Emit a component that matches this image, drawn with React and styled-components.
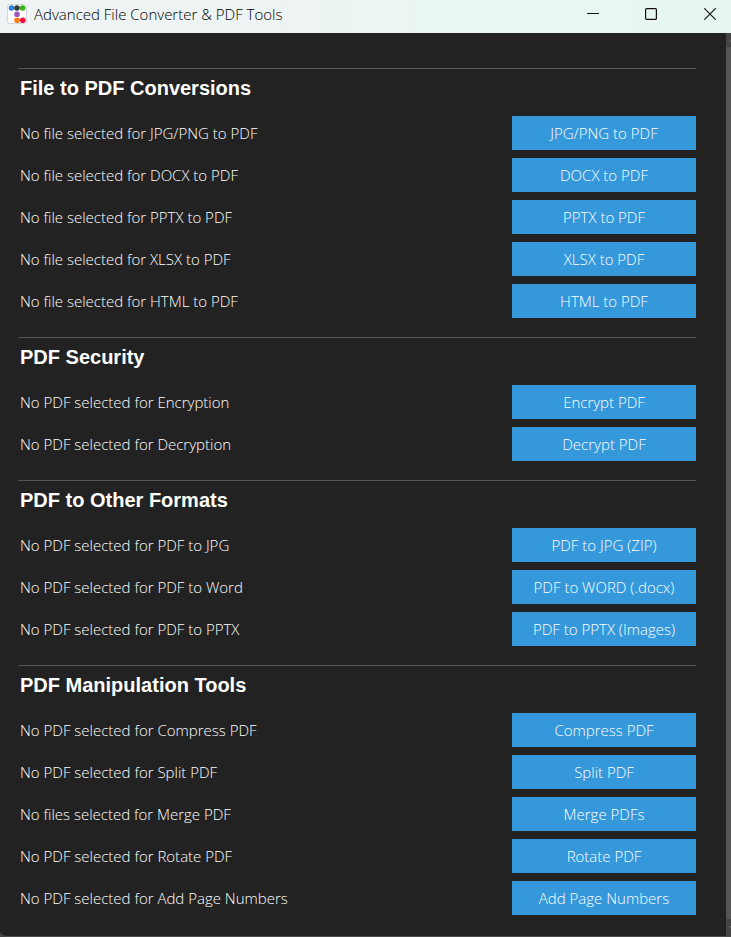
import React from "react";
import styled, { createGlobalStyle } from "styled-components";

const GlobalStyle = createGlobalStyle`
  *, *::before, *::after { box-sizing: border-box; }
  body {
    margin: 0;
    background: #434343;
    font-family: "Open Sans", "Noto Sans", sans-serif;
    font-weight: 340;
  }
`;

const Window = styled.div`
  display: flex;
  flex-direction: column;
  min-height: 100vh;
`;

const TitleBar = styled.header`
  display: flex;
  align-items: center;
  height: 33px;
  padding-left: 7px;
  background: linear-gradient(90deg, #eef3f4 0%, #eef3f3 35%, #e8f7f0 70%, #e7f6f3 100%);
  color: #111111;
`;

const Title = styled.h1`
  flex: 1;
  margin: 0 0 6px 7px;
  font-size: 15px;
  line-height: 20px;
  font-weight: 340;
  color: #000000;
  white-space: nowrap;
`;

const AppIcon = styled.svg`
  display: block;
  width: 20px;
  height: 20px;
  margin-bottom: 5px;
`;

const WindowControls = styled.div`
  display: flex;
  height: 100%;
`;

const ControlButton = styled.button`
  display: flex;
  align-items: center;
  justify-content: center;
  width: ${(p) => (p.$edge ? "51px" : "58px")};
  padding: ${(p) => (p.$edge ? "0 0 5px 9px" : "0 0 5px")};
  border: 0;
  background: transparent;
  color: #111111;

  svg { display: block; }
`;

const Body = styled.div`
  display: flex;
  flex: 1;
  background: #222222;
  border-bottom: 1px solid #4c4c4c;
  border-bottom-left-radius: 6px;
`;

const Content = styled.main`
  flex: 1;
  min-width: 0;
  padding: 35px 30px 20px 18px;
`;

const Section = styled.section`
  border-top: 1px solid #555555;

  & + & { margin-top: 19px; }
`;

const Heading = styled.h2`
  margin: 0;
  padding: 7px 2px 16px;
  font-family: "Liberation Sans", Arial, sans-serif;
  font-size: 20px;
  line-height: 24px;
  font-weight: 700;
  color: #ffffff;
`;

const Rows = styled.div`
  display: grid;
  gap: 8px;
`;

const Row = styled.div`
  display: flex;
  align-items: center;
  justify-content: space-between;
  gap: 16px;
  padding-left: 2px;
`;

const Status = styled.span`
  font-size: 15px;
  line-height: 20px;
  color: #ffffff;
`;

const ActionButton = styled.button`
  flex: none;
  width: 184px;
  height: 34px;
  padding: 0;
  border: 0;
  background: #3498db;
  color: #ffffff;
  font-family: inherit;
  font-size: 15px;
  line-height: 20px;
  font-weight: inherit;
  cursor: pointer;
`;

const ScrollTrack = styled.div`
  display: flex;
  flex-direction: column;
  width: 5px;
  overflow: hidden;
  background: #555555;
`;

const ScrollCap = styled.div`
  display: flex;
  align-items: center;
  height: ${(p) => (p.$end ? "17px" : "14px")};
  margin-top: ${(p) => (p.$end ? "auto" : "0")};
  padding-left: 3px;
  background: #444444;

  svg { flex: none; display: block; }
`;

const sections = [
  {
    title: "File to PDF Conversions",
    rows: [
      ["No file selected for JPG/PNG to PDF", "JPG/PNG to PDF"],
      ["No file selected for DOCX to PDF", "DOCX to PDF"],
      ["No file selected for PPTX to PDF", "PPTX to PDF"],
      ["No file selected for XLSX to PDF", "XLSX to PDF"],
      ["No file selected for HTML to PDF", "HTML to PDF"],
    ],
  },
  {
    title: "PDF Security",
    rows: [
      ["No PDF selected for Encryption", "Encrypt PDF"],
      ["No PDF selected for Decryption", "Decrypt PDF"],
    ],
  },
  {
    title: "PDF to Other Formats",
    rows: [
      ["No PDF selected for PDF to JPG", "PDF to JPG (ZIP)"],
      ["No PDF selected for PDF to Word", "PDF to WORD (.docx)"],
      ["No PDF selected for PDF to PPTX", "PDF to PPTX (Images)"],
    ],
  },
  {
    title: "PDF Manipulation Tools",
    rows: [
      ["No PDF selected for Compress PDF", "Compress PDF"],
      ["No PDF selected for Split PDF", "Split PDF"],
      ["No files selected for Merge PDF", "Merge PDFs"],
      ["No PDF selected for Rotate PDF", "Rotate PDF"],
      ["No PDF selected for Add Page Numbers", "Add Page Numbers"],
    ],
  },
];

const dots = [
  [4.5, 4, "#2a7fe0"],
  [10, 4, "#343a40"],
  [15.7, 4, "#3cb016"],
  [10, 10.2, "#9b59c0"],
  [10, 16.2, "#fd7e14"],
  [15.8, 16.2, "#ff0a3c"],
];

export default function App() {
  return (
    <>
      <GlobalStyle />
      <Window>
        <TitleBar>
          <AppIcon viewBox="0 0 20 20" aria-hidden="true">
            <rect x="0.5" y="0.5" width="19" height="19" rx="2" fill="#ffffff" stroke="#d3d5d6" />
            {dots.map(([x, y, fill]) => (
              <circle key={fill} cx={x} cy={y} r="2.8" fill={fill} />
            ))}
          </AppIcon>
          <Title>Advanced File Converter &amp; PDF Tools</Title>
          <WindowControls>
            <ControlButton type="button" aria-label="Minimize">
              <svg width="12" height="12" viewBox="0 0 12 12">
                <path d="M0 5.5H12" stroke="currentColor" />
              </svg>
            </ControlButton>
            <ControlButton type="button" aria-label="Maximize">
              <svg width="12" height="12" viewBox="0 0 12 12">
                <rect x="0.6" y="0.6" width="10.8" height="10.8" rx="1" fill="none" stroke="currentColor" strokeWidth="1.2" />
              </svg>
            </ControlButton>
            <ControlButton type="button" aria-label="Close" $edge>
              <svg width="12" height="12" viewBox="0 0 12 12">
                <path d="M0.3 0.3L11.7 11.7M11.7 0.3L0.3 11.7" stroke="currentColor" strokeWidth="1.1" />
              </svg>
            </ControlButton>
          </WindowControls>
        </TitleBar>
        <Body>
          <Content>
            {sections.map((section) => (
              <Section key={section.title}>
                <Heading>{section.title}</Heading>
                <Rows>
                  {section.rows.map(([status, action]) => (
                    <Row key={action}>
                      <Status>{status}</Status>
                      <ActionButton type="button">{action}</ActionButton>
                    </Row>
                  ))}
                </Rows>
              </Section>
            ))}
          </Content>
          <ScrollTrack aria-hidden="true">
            <ScrollCap>
              <svg width="6" height="4" viewBox="0 0 6 4"><path d="M0 4L3 0L6 4Z" fill="#666666" /></svg>
            </ScrollCap>
            <ScrollCap $end>
              <svg width="6" height="4" viewBox="0 0 6 4"><path d="M0 0L3 4L6 0Z" fill="#666666" /></svg>
            </ScrollCap>
          </ScrollTrack>
        </Body>
      </Window>
    </>
  );
}
